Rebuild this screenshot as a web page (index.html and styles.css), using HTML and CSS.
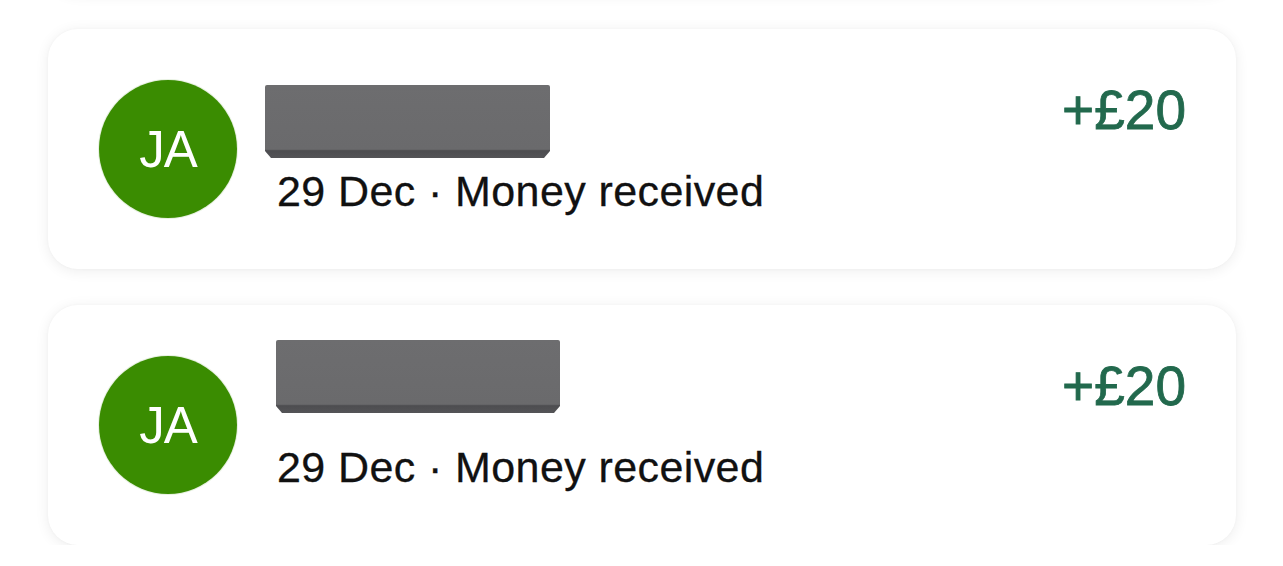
FILE: index.html
```html
<!DOCTYPE html>
<html lang="en">
<head>
<meta charset="utf-8">
<title>Transactions</title>
<link rel="stylesheet" href="styles.css">
</head>
<body>
<main class="list">
  <article class="card card--prev" aria-hidden="true"></article>
  <article class="card">
    <div class="avatar">JA</div>
    <div class="info">
      <div class="name"><span class="redact redact--a" aria-label="redacted"></span></div>
      <div class="meta">29 Dec · Money received</div>
    </div>
    <div class="amount">+£20</div>
  </article>
  <article class="card">
    <div class="avatar">JA</div>
    <div class="info">
      <div class="name"><span class="redact redact--b" aria-label="redacted"></span></div>
      <div class="meta">29 Dec · Money received</div>
    </div>
    <div class="amount">+£20</div>
  </article>
</main>
</body>
</html>
```
FILE: styles.css
```css
html, body {
  margin: 0;
  padding: 0;
  background: #ffffff;
  overflow: hidden;
}

.list {
  display: flex;
  flex-direction: column;
  gap: 36px;
  padding: 0 47px 0 48px;
  margin-top: -247px;
  font-family: "Liberation Sans", Arial, sans-serif;
}

.card {
  display: flex;
  align-items: flex-start;
  height: 240px;
  box-sizing: border-box;
  padding: 51px 50px 0 51px;
  background: #ffffff;
  border-radius: 30px;
  box-shadow: 0 2px 14px rgba(0, 0, 0, 0.075), 0 0 3px rgba(0, 0, 0, 0.03);
}

.avatar {
  flex: 0 0 auto;
  width: 138px;
  height: 138px;
  border-radius: 50%;
  background: #3a8c01;
  box-shadow: 0 0 0 1px rgba(58, 140, 1, 0.12);
  color: #ffffff;
  font-size: 51px;
  line-height: 1;
  display: flex;
  align-items: center;
  justify-content: center;
  letter-spacing: -1px;
}

.info {
  flex: 1 1 auto;
  margin-left: 40px;
  display: flex;
  flex-direction: column;
}

.name {
  position: relative;
  height: 87px;
}

.redact {
  position: absolute;
  width: 285px;
  height: 73px;
  background:
    linear-gradient(to bottom, #6d6d6f 0, #6a6a6c 88%, #4d4d50 90%, #545457 100%);
  clip-path: polygon(0 0, 100% 0, 100% calc(100% - 7px), calc(100% - 6px) 100%, 6px 100%, 0 calc(100% - 7px));
  border-radius: 2px 2px 0 0;
}

.redact--a {
  left: -12px;
  top: 5px;
}

.redact--b {
  left: -1px;
  top: -16px;
  width: 284px;
}

.meta {
  font-size: 43px;
  line-height: 48px;
  color: #111111;
  white-space: nowrap;
  letter-spacing: 0.4px;
  -webkit-text-stroke: 0.3px #111111;
}

.amount {
  flex: 0 0 auto;
  margin-top: 3px;
  font-size: 55px;
  line-height: 55px;
  color: #22694d;
  -webkit-text-stroke: 0.8px #22694d;
}
```
